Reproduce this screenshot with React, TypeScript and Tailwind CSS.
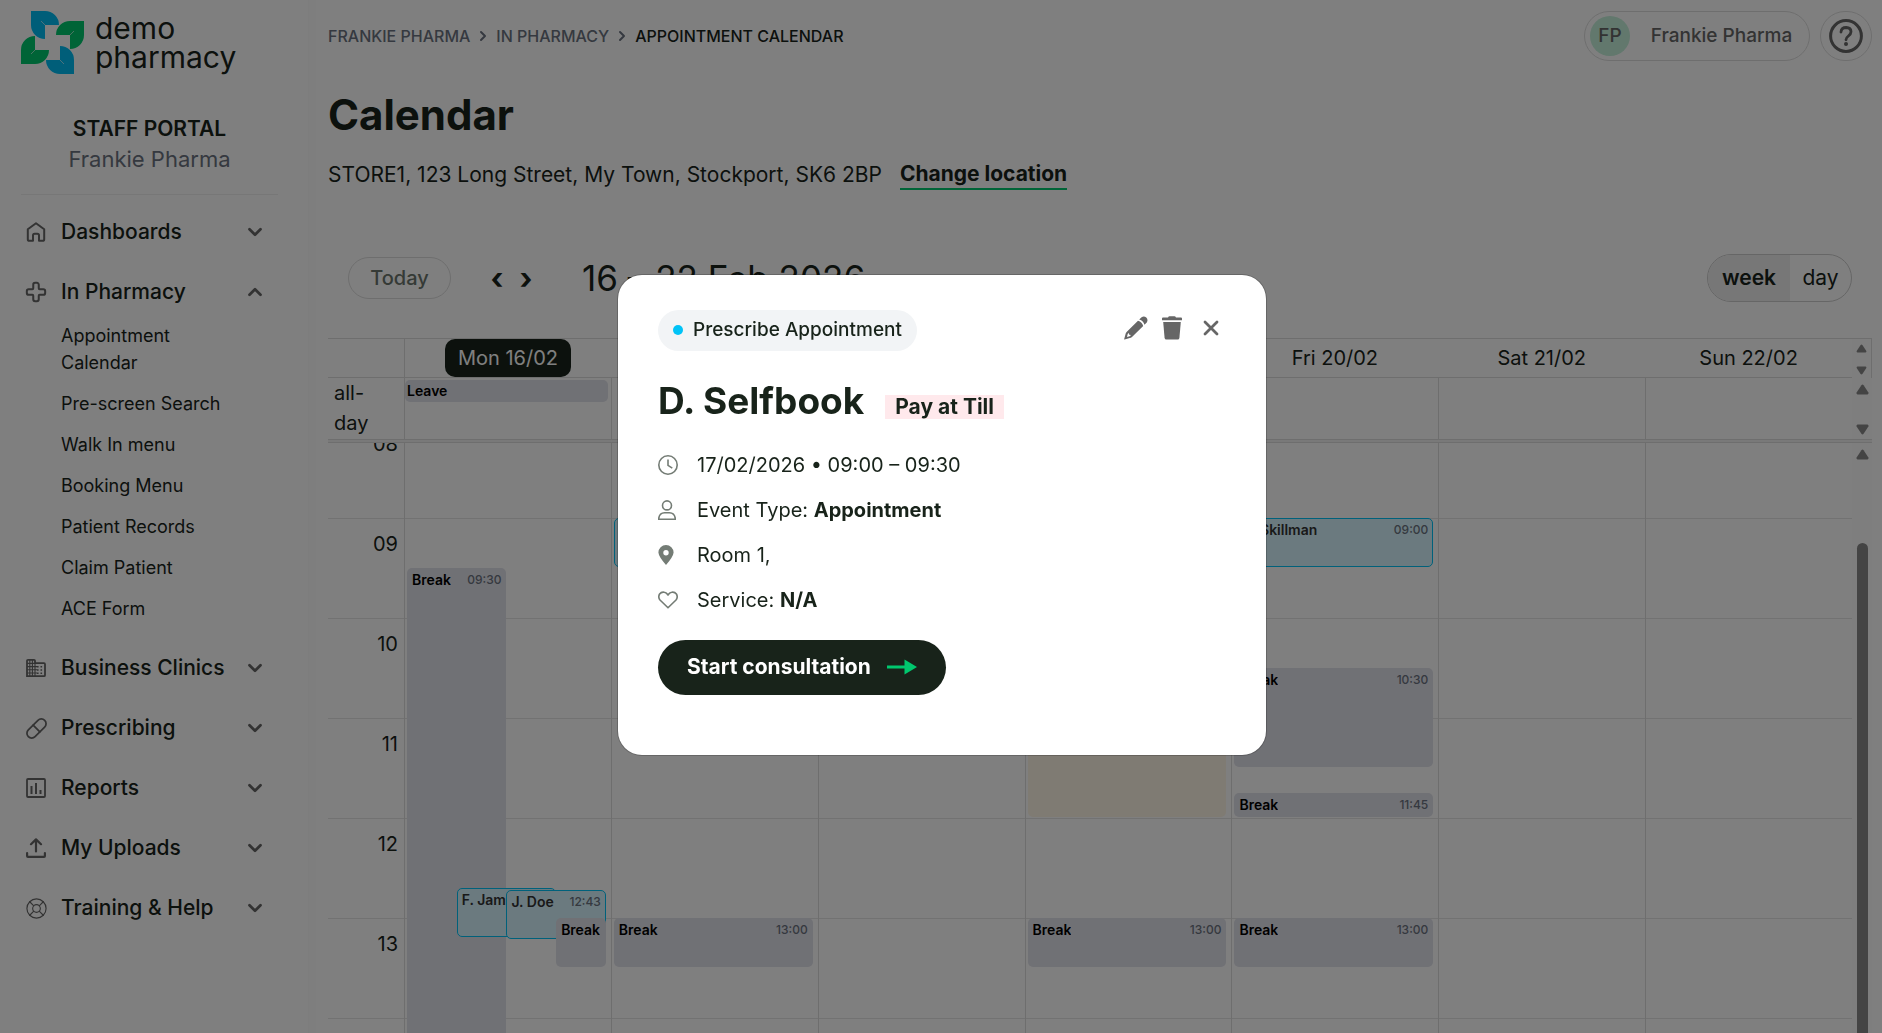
import type { ReactNode } from "react"
import { ChevronDown, ChevronRight, ChevronUp, Cross, LifeBuoy, Pill } from "lucide-react"

type CalEvent = {
  title: string
  time?: string
  start: number
  end: number
  left?: number
  width?: number
  kind: "break" | "appt" | "slot"
}

type Day = {
  label: string
  today?: boolean
  allDay?: string
  events: CalEvent[]
}

const FIRST_HOUR = 8
const HOUR_HEIGHT = 100
const hours = ["08", "09", "10", "11", "12", "13", "14"]

const days: Day[] = [
  {
    label: "Mon 16/02",
    today: true,
    allDay: "Leave",
    events: [
      { title: "Break", time: "09:30", start: 9.5, end: 15, left: 0, width: 50, kind: "break" },
      { title: "F. James", start: 12.7, end: 13.2, left: 25, width: 50, kind: "appt" },
      { title: "J. Doe", time: "12:43", start: 12.72, end: 13.22, left: 50, width: 50, kind: "appt" },
      { title: "Break", start: 13, end: 13.5, left: 75, width: 25, kind: "break" },
    ],
  },
  {
    label: "Tue 17/02",
    events: [
      { title: "D. Selfbook", time: "09:00", start: 9, end: 9.5, kind: "appt" },
      { title: "Break", time: "13:00", start: 13, end: 13.5, kind: "break" },
    ],
  },
  { label: "Wed 18/02", events: [] },
  {
    label: "Thu 19/02",
    events: [
      { title: "", start: 10, end: 12, kind: "slot" },
      { title: "Break", time: "13:00", start: 13, end: 13.5, kind: "break" },
    ],
  },
  {
    label: "Fri 20/02",
    events: [
      { title: "M. Skillman", time: "09:00", start: 9, end: 9.5, kind: "appt" },
      { title: "Break", time: "10:30", start: 10.5, end: 11.5, kind: "break" },
      { title: "Break", time: "11:45", start: 11.75, end: 12, kind: "break" },
      { title: "Break", time: "13:00", start: 13, end: 13.5, kind: "break" },
    ],
  },
  { label: "Sat 21/02", events: [] },
  { label: "Sun 22/02", events: [] },
]

const pharmacyLinks = [
  "Appointment Calendar",
  "Pre-screen Search",
  "Walk In menu",
  "Booking Menu",
  "Patient Records",
  "Claim Patient",
  "ACE Form",
]

const eventStyles = {
  break: "px-[5px] py-0.5 bg-[#e1e2ea] text-black font-semibold",
  appt: "px-1 py-px bg-[#d6f5ff] border border-[#00c3f7] text-[#333] font-semibold",
  slot: "bg-[#fff6e6]",
}

/* ICONS */

function Logo() {
  return (
    <svg width="63" height="63" viewBox="0 0 63 63" aria-hidden="true">
      <path d="M10 0H24A14 14 0 0 1 38 14H24V28A14 14 0 0 1 10 14Z" fill="#00bdf2" />
      <path d="M63 10V24A14 14 0 0 1 49 38V24H35A14 14 0 0 1 49 10Z" fill="#00c86e" />
      <path d="M53 63H39A14 14 0 0 1 25 49H39V35A14 14 0 0 1 53 49Z" fill="#00bdf2" />
      <path d="M0 53V39A14 14 0 0 1 14 25V39H28A14 14 0 0 1 14 53Z" fill="#00c86e" />
      <path d="M24 14l-4-4M49 24l4-4M39 49l4 4M14 39l-4 4" stroke="#fff" strokeOpacity=".6" />
    </svg>
  )
}

function HomeIcon() {
  return (
    <svg width="20" height="20" viewBox="0 0 20 20" fill="none" stroke="currentColor" strokeWidth="2" strokeLinejoin="round">
      <path d="M1.800 7.2L10 1.2L18.200 7.2V17.2Q18.200 18.8 16.6 18.8H13V13.4Q13 11.8 11.4 11.8H8.6Q7 11.8 7 13.4V18.8H3.4Q1.8 18.8 1.8 17.2Z" />
    </svg>
  )
}

function BuildingIcon() {
  return (
    <svg width="20" height="20" viewBox="0 0 20 20" fill="none" stroke="currentColor">
      <path d="M1 18.2V2.8Q1 1.8 2 1.8H8Q9 1.8 9 2.8V5.2H18Q19 5.2 19 6.2V17.2Q19 18.2 18 18.2Z" strokeWidth="1.8" />
      <path d="M3.8 2V18M6.4 2V18M9 5V18M1 5.4H9M1 8.6H11M1 11.8H11M1 15H11" strokeWidth="1.1" />
      <path d="M11 8.8h1.6M14.5 8.8h1.6M11 12h1.6M14.5 12h1.6M11 15.2h1.6M14.5 15.2h1.6" strokeWidth="1.6" />
    </svg>
  )
}

function ReportsIcon() {
  return (
    <svg width="20" height="20" viewBox="0 0 20 20" fill="none" stroke="currentColor">
      <rect x="1" y="1" width="18" height="18" rx="1" strokeWidth="1.8" />
      <path d="M5.5 8V16M10 5V16M14.5 12V16" strokeWidth="2" />
    </svg>
  )
}

function UploadIcon() {
  return (
    <svg width="20" height="20" viewBox="0 0 20 20" fill="none" stroke="currentColor" strokeWidth="2.2" strokeLinecap="round" strokeLinejoin="round">
      <path d="M10 13.4V1.6M5 6.2L10 1.4L15 6.2" />
      <path d="M1.1 15V18Q1.1 18.9 2 18.900H18Q18.900 18.9 18.9 18V15" />
    </svg>
  )
}

function PencilIcon() {
  return (
    <svg width="24" height="24" viewBox="0 0 24 24" fill="currentColor">
      <path d="M15.2 3.6L17.6 1.2Q20 -.4 22.3 1.6Q24.4 4 22.8 6.4L20.4 8.8Q19.6 5 15.2 3.6Z" />
      <path fillRule="evenodd" d="M14 4.8Q18.2 6 19.2 10L8 21Q7 21.8 5.8 22L.6 23.6Q0 23.6 .2 22.9L1.7 17.5Q2 16.6 2.6 16ZM3.7 18.1L3 20.9L5.7 20.2L7 18.9L5.2 18.7L4.9 16.9Z" />
    </svg>
  )
}

function TrashIcon() {
  return (
    <svg width="20" height="24" viewBox="0 0 20 24" fill="currentColor">
      <path d="M6.2 1.2Q6.4 .2 7.5 .2H12.5Q13.6 .2 13.8 1.2L14 1.6H19Q20 1.6 20 2.6V4.3H0V2.6Q0 1.6 1 1.6H6Z" />
      <path d="M1.2 6H18.8L17.4 21.9Q17.2 23.5 15.6 23.5H4.4Q2.8 23.5 2.6 21.9Z" />
    </svg>
  )
}

function CloseIcon() {
  return (
    <svg width="16" height="16" viewBox="0 0 16 16" fill="none" stroke="currentColor" strokeWidth="2.8" strokeLinecap="round">
      <path d="M2 2L14 14M14 2L2 14" />
    </svg>
  )
}

function HelpIcon() {
  return (
    <svg width="34" height="34" viewBox="0 0 34 34" fill="none" stroke="currentColor" strokeLinecap="round">
      <circle cx="17" cy="17" r="15.4" strokeWidth="3" />
      <path d="M12 13Q12.3 8.5 17.2 8.5Q22 8.7 22 12.8Q22 15 19.4 17Q17 18.8 17 20.8" strokeWidth="2.8" />
      <circle cx="17" cy="25" r="2" fill="currentColor" stroke="none" />
    </svg>
  )
}

function ClockIcon() {
  return (
    <svg width="20" height="20" viewBox="0 0 20 20" fill="none" stroke="currentColor" strokeWidth="1.6">
      <circle cx="10" cy="10" r="9.2" />
      <path d="M10 4.4V10.4L14.3 13.2" />
    </svg>
  )
}

function PersonIcon() {
  return (
    <svg width="18" height="20" viewBox="0 0 18 20" fill="none" stroke="currentColor" strokeWidth="1.6">
      <circle cx="9" cy="5.4" r="4.5" />
      <path d="M.8 19.2V18Q1.6 13 6.6 12.8H11.4Q16.4 13 17.2 18V19.2Z" />
    </svg>
  )
}

function PinIcon() {
  return (
    <svg width="16" height="20" viewBox="0 0 16 20" fill="currentColor">
      <path fillRule="evenodd" d="M8 0A7.6 7.6 0 0 1 15.6 7.6Q15.2 12 8 20Q.8 12 .4 7.6A7.6 7.6 0 0 1 8 0ZM8 5A2.7 2.7 0 1 0 8 10.4A2.7 2.7 0 1 0 8 5Z" />
    </svg>
  )
}

function HeartIcon() {
  return (
    <svg width="20" height="18" viewBox="0 0 20 18" fill="none" stroke="currentColor" strokeWidth="1.6" strokeLinejoin="round">
      <path d="M10 16.8L2 9Q-.2 6 1.6 3Q3.4 .6 6.3 1.2Q8.6 1.6 10 4Q11.4 1.6 13.7 1.2Q16.6 .6 18.4 3Q20.2 6 18 9Z" />
    </svg>
  )
}

function ArrowIcon() {
  return (
    <svg width="30" height="16" viewBox="0 0 30 16" fill="#00c86e" aria-hidden="true">
      <path d="M0 6.5H17.5V.5L30 8L17.5 15.5V9.5H0Z" />
    </svg>
  )
}

function Caret({ down, small }: { down?: boolean; small?: boolean }) {
  return (
    <svg width={small ? 11 : 13} height={small ? 9 : 11} viewBox="0 0 13 11" fill="#888" aria-hidden="true">
      <path
        d={down ? "M1.5 .5H11.5Q13 1 12.4 2.4L7.6 9.8Q6.5 11 5.4 9.8L.6 2.4Q0 1 1.5 .5Z" : "M1.5 10.5H11.5Q13 10 12.4 8.6L7.6 1.2Q6.5 0 5.4 1.2L.6 8.6Q0 10 1.5 10.5Z"}
      />
    </svg>
  )
}

/* SIDEBAR */

function NavGroup({ icon, label, open, children }: { icon: ReactNode; label: string; open?: boolean; children?: ReactNode }) {
  const Chevron = open ? ChevronUp : ChevronDown
  return (
    <li>
      <button type="button" aria-expanded={!!open} className="flex h-[46px] w-full items-center pr-3 pl-[3px] text-left text-[21px] font-medium">
        <span className="flex w-6 shrink-0 justify-center text-[#666]">{icon}</span>
        <span className="ml-[13px] flex-1 whitespace-nowrap">{label}</span>
        <Chevron size={22} strokeWidth={3} className="text-[#666]" />
      </button>
      {children}
    </li>
  )
}

function Sidebar() {
  return (
    <aside className="w-[308px] shrink-0 pr-[30px] pl-[21px]">
      <a href="#home" className="flex items-start gap-[11px] pt-[11px]">
        <Logo />
        <span className="pt-[3px] text-[30px] leading-[29px]">demo<br />pharmacy</span>
      </a>
      <div className="mt-10 border-b border-[#eee] pb-5 text-center leading-[30px]">
        <div className="text-[21px] font-semibold">STAFF PORTAL</div>
        <div className="text-[22px] text-[#6b7280]">Frankie Pharma</div>
      </div>
      <nav className="mt-3.5">
        <ul className="flex flex-col gap-3.5">
          <NavGroup icon={<HomeIcon />} label="Dashboards" />
          <NavGroup icon={<Cross size={22} strokeWidth={2.2} />} label="In Pharmacy" open>
            <ul className="pb-0.5 pl-10 text-lg leading-[27px]">
              {pharmacyLinks.map((link) => (
                <li key={link} className="max-w-[170px] py-[7px]">
                  <a href="#in-pharmacy">{link}</a>
                </li>
              ))}
            </ul>
          </NavGroup>
          <NavGroup icon={<BuildingIcon />} label="Business Clinics" />
          <NavGroup icon={<Pill size={23} strokeWidth={1.8} />} label="Prescribing" />
          <NavGroup icon={<ReportsIcon />} label="Reports" />
          <NavGroup icon={<UploadIcon />} label="My Uploads" />
          <NavGroup icon={<LifeBuoy size={23} strokeWidth={1.2} />} label="Training & Help" />
        </ul>
      </nav>
    </aside>
  )
}

/* HEADER */

function TopBar() {
  return (
    <header className="flex h-[50px] items-center gap-2.5">
      <nav aria-label="Breadcrumb" className="flex flex-1 items-center gap-[5px] text-base font-medium text-[#6b7280] uppercase">
        <a href="#home">Frankie Pharma</a>
        <ChevronRight size={16} strokeWidth={3} />
        <a href="#in-pharmacy">In Pharmacy</a>
        <ChevronRight size={16} strokeWidth={3} />
        <span className="text-[#18231a]">Appointment Calendar</span>
      </nav>
      <button type="button" className="flex h-[50px] w-[226px] items-center rounded-full border border-[#ddd] pl-[5px] text-[19px] font-medium text-[#666]">
        <span className="flex size-10 items-center justify-center rounded-full bg-[#c4f0da]">FP</span>
        <span className="flex-1 pl-1 text-center">Frankie Pharma</span>
      </button>
      <button type="button" aria-label="Help" className="flex h-[50px] w-[52px] items-center justify-center rounded-full border border-[#ddd] text-[#666]">
        <HelpIcon />
      </button>
    </header>
  )
}

/* CALENDAR */

function Toolbar() {
  return (
    <div className="mt-16 flex h-12 items-center pr-5 pl-5">
      <button type="button" className="h-[42px] w-[103px] rounded-full border border-[#ddd] text-xl font-medium text-[#6b756d]">Today</button>
      <button type="button" aria-label="Previous week" className="ml-[39px] w-[14px] text-3xl leading-9 font-bold">‹</button>
      <button type="button" aria-label="Next week" className="ml-[15px] w-[14px] text-3xl leading-9 font-bold">›</button>
      <h2 className="ml-[49px] flex-1 text-[35px]">16 – 22 Feb 2026</h2>
      <div className="flex h-12 overflow-hidden rounded-full border border-[#ccc] text-[21px]">
        <button type="button" aria-pressed="true" className="w-[82px] bg-[#eee] font-semibold">week</button>
        <button type="button" aria-pressed="false" className="w-[61px]">day</button>
      </div>
    </div>
  )
}

function EventBox({ event }: { event: CalEvent }) {
  const { title, time, start, end, left = 0, width = 100, kind } = event
  return (
    <div
      className={`absolute flex justify-between gap-1 overflow-hidden rounded-[5px] text-sm leading-5 ${eventStyles[kind]}`}
      style={{
        top: (start - FIRST_HOUR) * HOUR_HEIGHT,
        height: (end - start) * HOUR_HEIGHT - 1,
        left: `${left}%`,
        width: `${width}%`,
      }}
    >
      <span className="overflow-hidden whitespace-nowrap">{title}</span>
      {time && <span className="text-xs leading-5 font-medium text-[#6b7280]">{time}</span>}
    </div>
  )
}

function Calendar() {
  return (
    <section aria-label="Week calendar" className="mt-9 flex min-h-0 flex-1 flex-col border-t border-[#ddd] text-xl">
      {/* DAY NAMES */}
      <div className="flex h-[39px] shrink-0">
        <div className="w-[76px] border-b border-[#ddd]" />
        <div className="grid flex-1 grid-cols-7 border-b border-[#ddd]">
          {days.map((day) => (
            <div key={day.label} className="flex items-center justify-center first:border-l first:border-[#ddd]">
              {day.today ? (
                <span className="flex h-[38px] items-center rounded-[10px] bg-[#18231a] px-[13px] text-white">{day.label}</span>
              ) : (
                <span>{day.label}</span>
              )}
            </div>
          ))}
        </div>
        <div className="flex w-5 flex-col items-center justify-between border-r border-[#ddd] bg-[#fdfdfd] pt-[5px] pb-[3px]">
          <Caret small />
          <Caret small down />
        </div>
      </div>

      {/* ALL DAY */}
      <div className="flex h-[61px] shrink-0">
        <div className="w-[76px] pl-1.5 leading-[30px]">all-<br />day</div>
        <div className="grid flex-1 grid-cols-7">
          {days.map((day) => (
            <div key={day.label} className="border-l border-[#ddd] pt-0.5 pr-[3px]">
              {day.allDay && (
                <div className="h-[22px] rounded-[5px] bg-[#e1e2ea] px-0.5 text-sm leading-[22px] font-semibold text-black">{day.allDay}</div>
              )}
            </div>
          ))}
        </div>
        <div className="flex w-5 flex-col items-center justify-between bg-[#fdfdfd] pt-1.5 pb-1">
          <Caret />
          <Caret down />
        </div>
      </div>
      <div className="h-1 shrink-0 border-y border-[#ddd] bg-[#f3f3f3]" />

      {/* TIME GRID */}
      <div className="flex min-h-0 flex-1">
        <div className="min-w-0 flex-1 overflow-hidden">
          <div className="-mt-[25px] flex">
            <div className="w-[76px] shrink-0">
              {hours.map((hour) => (
                <div key={hour} className="h-[100px] border-t border-[#e5e5e5] pt-2.5 pr-1.5 text-right leading-[30px]">{hour}</div>
              ))}
            </div>
            <div className="grid flex-1 grid-cols-7">
              {days.map((day) => (
                <div key={day.label} className="relative border-l border-[#ddd]">
                  {hours.map((hour) => (
                    <div key={hour} className="h-[100px] border-t border-[#e5e5e5]" />
                  ))}
                  <div className="absolute inset-y-0 right-[5px] left-0.5">
                    {day.events.map((event) => (
                      <EventBox key={`${event.title}${event.start}`} event={event} />
                    ))}
                  </div>
                </div>
              ))}
            </div>
          </div>
        </div>
        <div className="flex w-5 flex-col items-center bg-[#fdfdfd] pt-1.5">
          <Caret />
          <div className="mt-[83px] w-[11px] flex-1 rounded-t-full bg-[#888]" />
        </div>
      </div>
    </section>
  )
}

/* APPOINTMENT POPUP */

function DetailRow({ icon, children }: { icon: ReactNode; children: ReactNode }) {
  return (
    <li className="flex h-[45px] items-center">
      <span className="flex w-[39px] shrink-0 text-[#747c75]">{icon}</span>
      <span>{children}</span>
    </li>
  )
}

function AppointmentDialog() {
  return (
    <div className="fixed inset-0 flex items-center justify-center bg-black/50 pb-1 pl-0.5">
      <div role="dialog" aria-modal="true" aria-labelledby="patient-name" className="w-[648px] rounded-3xl bg-white px-10 pt-[35px] pb-[60px] text-xl ring-1 ring-black/20">
        <div className="flex items-start justify-between">
          <div className="flex h-[41px] items-center gap-2.5 rounded-full bg-[#f2f4f6] px-[15px] text-[19px] font-medium">
            <span className="size-2.5 rounded-full bg-[#00c3f7]" />
            Prescribe Appointment
          </div>
          <div className="flex items-center pt-1.5 pr-[7px] text-[#666]">
            <button type="button" aria-label="Edit"><PencilIcon /></button>
            <button type="button" aria-label="Delete" className="ml-3.5"><TrashIcon /></button>
            <button type="button" aria-label="Close" className="ml-[21px]"><CloseIcon /></button>
          </div>
        </div>
        <div className="mt-[26px] flex items-baseline gap-[21px]">
          <h3 id="patient-name" className="text-[37px] leading-[48px] font-bold">D. Selfbook</h3>
          <span className="bg-[#ffe9ec] px-2.5 text-[21px] leading-6 font-bold">Pay at Till</span>
        </div>
        <ul className="mt-[18px]">
          <DetailRow icon={<ClockIcon />}>17/02/2026 • 09:00 – 09:30</DetailRow>
          <DetailRow icon={<PersonIcon />}>Event Type: <b>Appointment</b></DetailRow>
          <DetailRow icon={<PinIcon />}>Room 1,</DetailRow>
          <DetailRow icon={<HeartIcon />}>Service: <b>N/A</b></DetailRow>
        </ul>
        <button type="button" className="mt-[17px] flex h-[55px] items-center gap-4 rounded-full bg-[#18231a] px-[29px] text-[21px] font-bold text-white">
          Start consultation
          <ArrowIcon />
        </button>
      </div>
    </div>
  )
}

export default function App() {
  return (
    <div className="flex h-screen overflow-hidden bg-white font-['Inter',sans-serif] text-[#18231a]">
      <Sidebar />
      <div className="w-2 shrink-0 border-l border-[#fafafa] bg-[#fdfdfd]" />
      <main className="flex min-w-0 flex-1 flex-col pt-[11px] pr-2.5 pl-3">
        <TopBar />
        <h1 className="mt-[29px] text-[42px] leading-[50px] font-bold">Calendar</h1>
        <div className="mt-5 flex items-center gap-[18px] text-[21px] leading-7">
          <span>STORE1, 123 Long Street, My Town, Stockport, SK6 2BP</span>
          <a href="#location" className="border-b-2 border-[#00c86e] font-bold">Change location</a>
        </div>
        <Toolbar />
        <Calendar />
      </main>
      <AppointmentDialog />
    </div>
  )
}
